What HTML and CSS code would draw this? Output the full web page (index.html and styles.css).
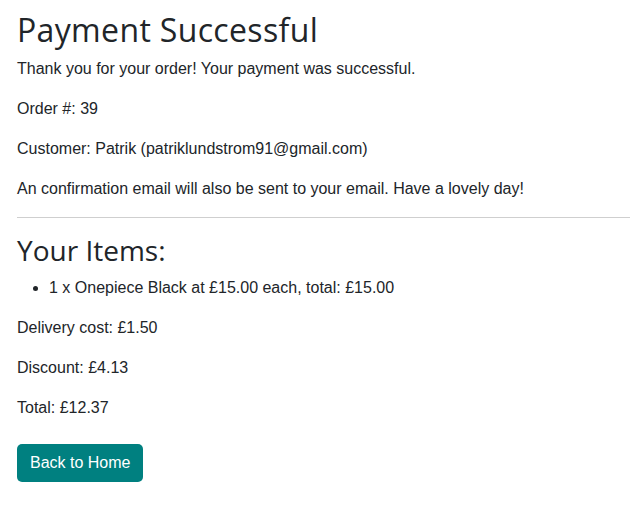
FILE: index.html
```html
<!DOCTYPE html>
<html lang="en">
<head>
<meta charset="utf-8">
<title>Payment Successful</title>
<link rel="stylesheet" href="styles.css">
</head>
<body>
<main class="page">
  <h1 class="title">Payment Successful</h1>
  <p>Thank you for your order! Your payment was successful.</p>
  <p>Order #: 39</p>
  <p>Customer: Patrik (patriklundstrom91@gmail.com)</p>
  <p>An confirmation email will also be sent to your email. Have a lovely day!</p>
  <hr class="divider">
  <h2 class="subtitle">Your Items:</h2>
  <ul class="items">
    <li>1 x Onepiece Black at £15.00 each, total: £15.00</li>
  </ul>
  <p>Delivery cost: £1.50</p>
  <p>Discount: £4.13</p>
  <p>Total: £12.37</p>
  <div class="actions">
    <a class="btn" href="#">Back to Home</a>
  </div>
</main>
</body>
</html>
```

FILE: styles.css
```css
* { box-sizing: border-box; }
html, body { margin: 0; padding: 0; background: #fff; }
body {
  font-family: "Liberation Sans", Arial, sans-serif;
  font-size: 16px;
  line-height: 1.5;
  color: #212529;
}
.page { padding: 11px 0 0 17px; }
.title, .subtitle {
  font-family: "Open Sans", Lato, sans-serif;
  font-weight: 400;
  line-height: 1.2;
  margin: 0 0 8px 0;
  color: #212529;
}
.title { font-size: 32px; letter-spacing: 0.35px; }
.subtitle { font-size: 28px; margin-bottom: 8px; }
p { margin: 0 0 16px 0; }
.divider {
  border: 0;
  border-top: 1px solid #cfcfcf;
  margin: 16px 0;
}
.items { margin: 0 0 16px 0; padding-left: 32px; }
.actions { padding-top: 8px; }
.btn {
  display: inline-block;
  background: #008080;
  color: #fff;
  text-decoration: none;
  padding: 7px 13px;
  border-radius: 5px;
  line-height: 24px;
}
```
